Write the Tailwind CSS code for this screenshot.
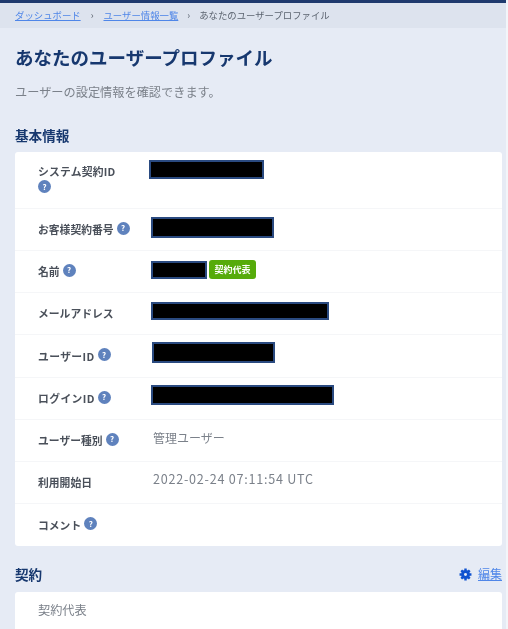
<!DOCTYPE html>
<html lang="ja">
<head>
    <meta charset="UTF-8">
    <title>あなたのユーザープロファイル</title>
    <script src="https://cdn.jsdelivr.net/npm/@tailwindcss/browser@4"></script>
</head>
<body class="h-[629px] overflow-hidden bg-[#f3f5f9] font-['Noto_Sans_CJK_JP','Noto_Sans',sans-serif]">
<div class="mr-[2px] h-[629px] bg-[#e6ebf5] blur-[0.35px]">
    <!-- Top border -->
    <div class="h-[3px] bg-[#1f3a6e]"></div>

    <!-- Breadcrumb -->
    <nav class="h-[25px] bg-[#dde3ee] pl-[15px] flex items-center text-[9.4px] text-[#5c6470]">
        <a href="#" class="text-[#4f86e8] underline">ダッシュボード</a>
        <span class="mx-[10px]">›</span>
        <a href="#" class="text-[#4f86e8] underline">ユーザー情報一覧</a>
        <span class="mx-[9px]">›</span>
        <span>あなたのユーザープロファイル</span>
    </nav>

    <main class="pl-[15px] pr-[4px]">
        <h1 class="mt-[16px] text-[18.5px] leading-[26px] font-bold text-[#17386f]">あなたのユーザープロファイル</h1>
        <p class="mt-[13px] text-[12.2px] leading-[18px] text-[#7b818a]">ユーザーの設定情報を確認できます。</p>

        <h2 class="mt-[25px] text-[13.6px] leading-[18px] font-bold text-[#17386f]">基本情報</h2>

        <!-- Basic info card -->
        <section class="mt-[8px] bg-white rounded-[3px] text-[10.8px] font-semibold text-[#4a505a] divide-y divide-[#f5f6f8]">
            <div class="h-[57px] flex pl-[23px]">
                <div class="w-[111px] pt-[11px] leading-[16px]">
                    <div class="tracking-[0.2px]">システム契約ID</div>
                    <span class="mt-[1px] flex size-[13px] items-center justify-center rounded-full bg-[#5f82bd] text-[8px] font-bold text-white">?</span>
                </div>
                <div class="mt-[8px] h-[19px] w-[115px] bg-black border-2 border-[#2a4a80]"></div>
            </div>
            <div class="h-[42px] flex items-center pl-[23px]">
                <div class="w-[113px] flex items-center gap-[3px]">お客様契約番号
                    <span class="flex size-[13px] mb-[3px] items-center justify-center rounded-full bg-[#5f82bd] text-[8px] font-bold text-white">?</span>
                </div>
                <div class="mb-[5px] h-[21px] w-[123px] bg-black border-2 border-[#2a4a80]"></div>
            </div>
            <div class="h-[42px] flex items-center pl-[23px]">
                <div class="w-[113px] flex items-center gap-[3px]">名前
                    <span class="flex size-[13px] mb-[3px] items-center justify-center rounded-full bg-[#5f82bd] text-[8px] font-bold text-white">?</span>
                </div>
                <div class="mb-[4px] h-[18px] w-[56px] bg-black border-2 border-[#2a4a80]"></div>
                <span class="mb-[4px] ml-[2px] h-[19px] w-[47px] flex items-center justify-center rounded-[3px] bg-[#56ab0a] text-[9px] font-bold text-white">契約代表</span>
            </div>
            <div class="h-[42px] flex items-center pl-[23px]">
                <div class="w-[113px]">メールアドレス</div>
                <div class="mb-[6px] h-[18px] w-[178px] bg-black border-2 border-[#2a4a80]"></div>
            </div>
            <div class="h-[43px] flex items-center pl-[23px]">
                <div class="w-[114px] flex items-center gap-[3px] tracking-[0.4px]">ユーザーID
                    <span class="flex size-[13px] mb-[3px] items-center justify-center rounded-full bg-[#5f82bd] text-[8px] font-bold text-white">?</span>
                </div>
                <div class="mb-[8px] h-[21px] w-[123px] bg-black border-2 border-[#2a4a80]"></div>
            </div>
            <div class="h-[42px] flex items-center pl-[23px]">
                <div class="w-[113px] flex items-center gap-[3px] tracking-[0.4px]">ログインID
                    <span class="flex size-[13px] mb-[3px] items-center justify-center rounded-full bg-[#5f82bd] text-[8px] font-bold text-white">?</span>
                </div>
                <div class="mb-[8px] h-[20px] w-[183px] bg-black border-2 border-[#2a4a80]"></div>
            </div>
            <div class="h-[42px] flex items-center pl-[23px]">
                <div class="w-[115px] flex items-center gap-[3px]">ユーザー種別
                    <span class="flex size-[13px] mb-[3px] items-center justify-center rounded-full bg-[#5f82bd] text-[8px] font-bold text-white">?</span>
                </div>
                <div class="mb-[6px] text-[12px] font-normal text-[#7b818a]">管理ユーザー</div>
            </div>
            <div class="h-[42px] flex items-center pl-[23px]">
                <div class="w-[115px]">利用開始日</div>
                <div class="mb-[6px] text-[12.6px] font-normal text-[#7b818a] tracking-[0.75px]">2022-02-24 07:11:54 UTC</div>
            </div>
            <div class="h-[42px] flex items-center pl-[23px]">
                <div class="flex items-center gap-[3px]">コメント
                    <span class="flex size-[13px] mb-[3px] items-center justify-center rounded-full bg-[#5f82bd] text-[8px] font-bold text-white">?</span>
                </div>
            </div>
        </section>

        <!-- Contract -->
        <div class="mt-[19px] flex items-center justify-between">
            <h2 class="text-[13.6px] leading-[18px] font-bold text-[#17386f]">契約</h2>
            <a href="#" class="flex items-center gap-[6px] text-[12px] leading-[18px] text-[#4f86e8]">
                <svg class="size-[13px]" viewBox="0 0 24 24" fill="none" stroke="#0f52d0" stroke-width="5.5" stroke-linejoin="round" aria-hidden="true">
                    <circle cx="12" cy="12" r="5.5"/>
                    <path stroke-width="4.5" stroke-linecap="butt" d="M12 1v4M12 19v4M1 12h4M19 12h4M4.2 4.2l2.9 2.9M16.9 16.9l2.9 2.9M4.2 19.8l2.9-2.9M16.9 7.1l2.9-2.9"/>
                </svg>
                <span class="underline">編集</span>
            </a>
        </div>
        <section class="mt-[9px] h-[60px] bg-white rounded-[3px] pl-[23px] pt-[9px] text-[12.2px] leading-[18px] text-[#7b818a]">契約代表</section>
    </main>
</div>
</body>
</html>
